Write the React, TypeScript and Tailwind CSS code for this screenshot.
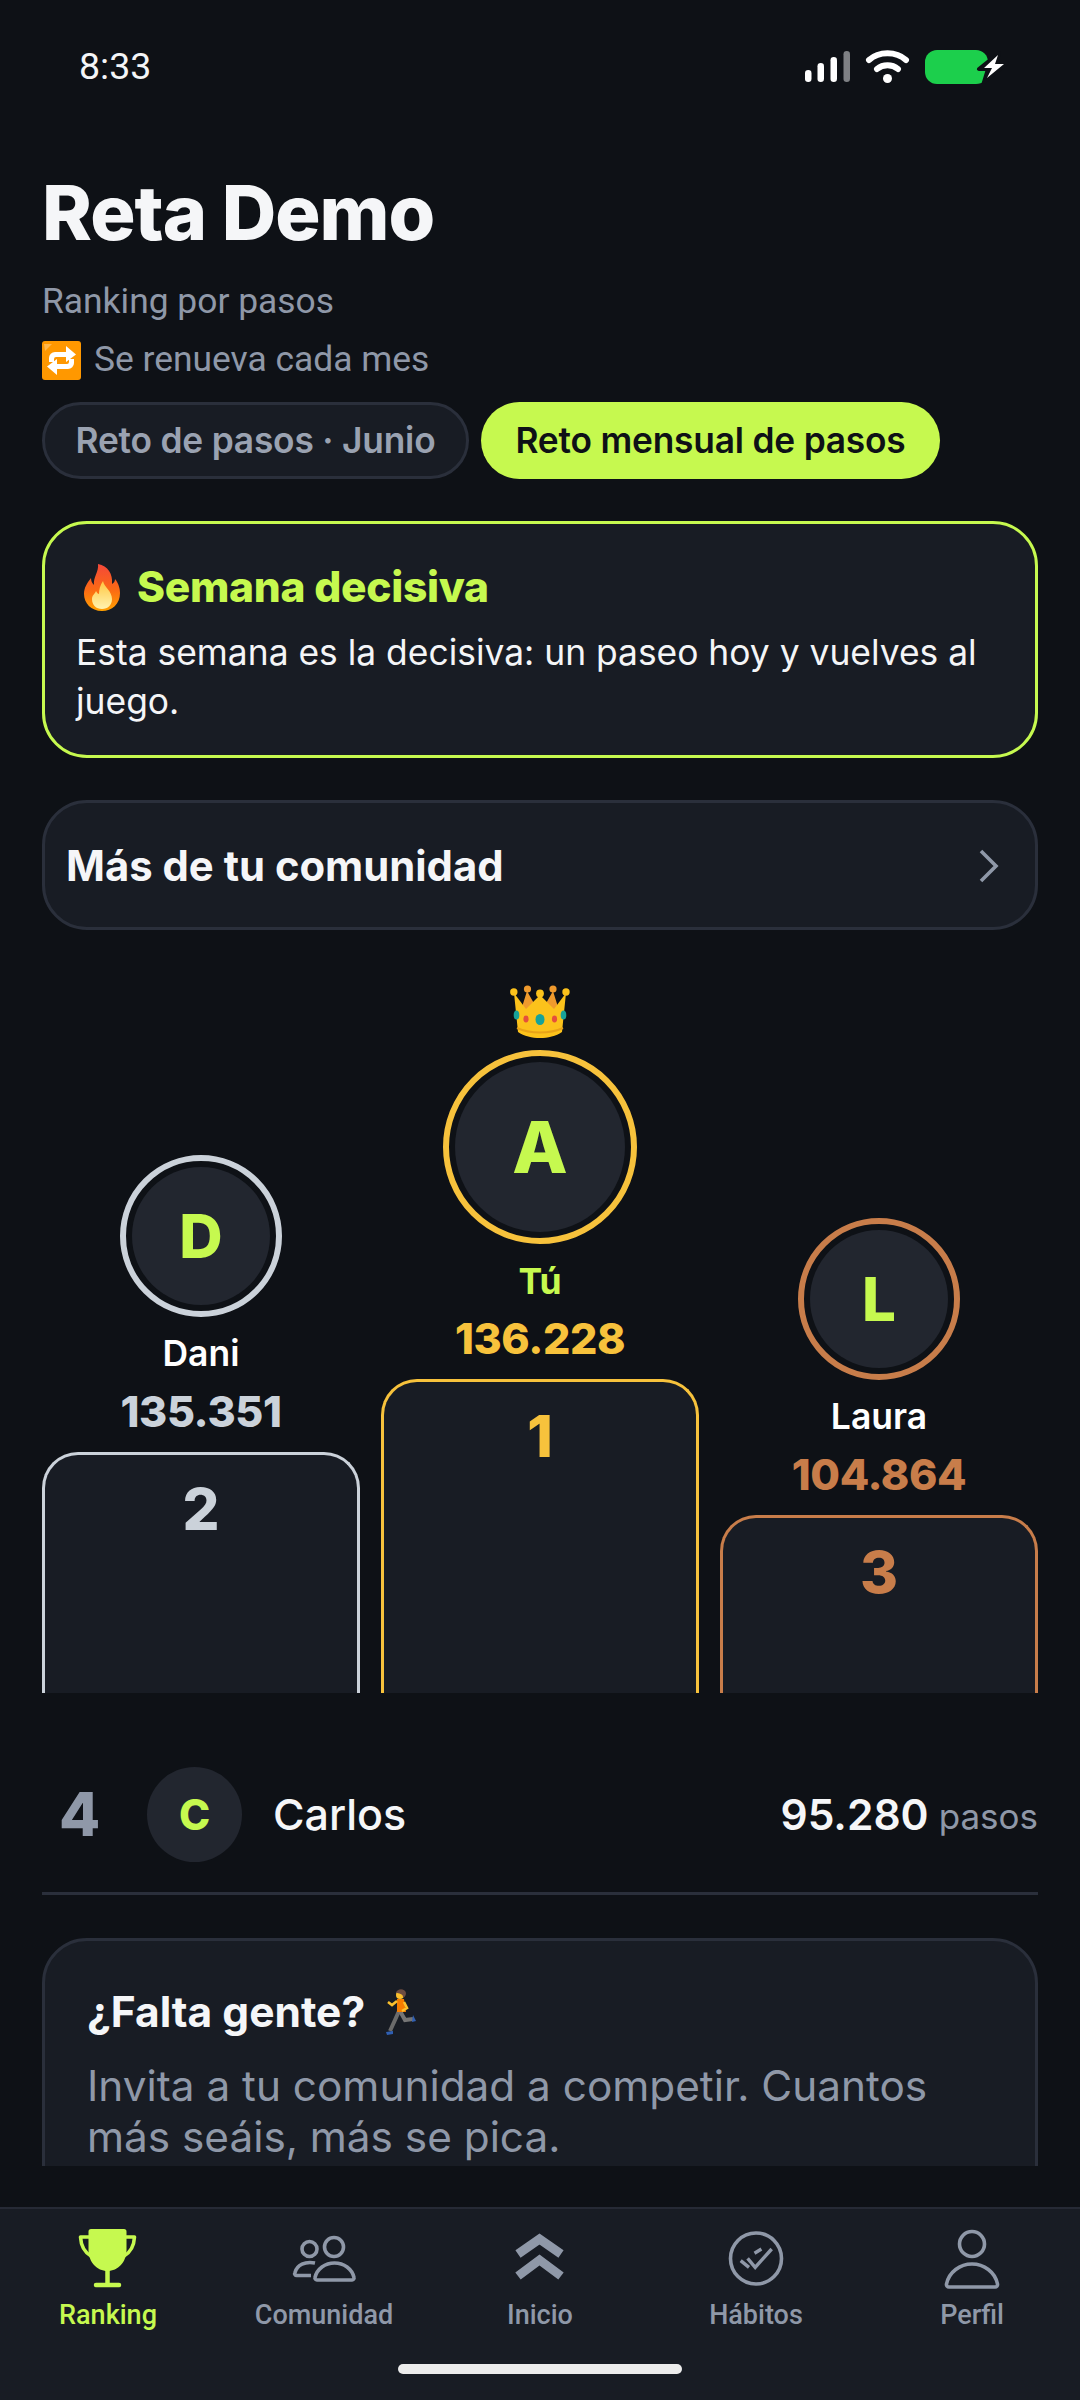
function StatusIcons() {
  return (
    <svg width="206" height="40" viewBox="803 48 206 40" className="block">
      <rect x="805" y="71" width="6.5" height="12" rx="3.2" fill="#fff" />
      <rect x="817.5" y="64" width="6.5" height="19" rx="3.2" fill="#fff" />
      <rect x="830.5" y="58" width="6.5" height="25" rx="3.2" fill="#fff" />
      <rect x="843.5" y="52" width="6.5" height="31" rx="3.2" fill="#7e8084" />
      <path d="M869 61 C879 52 896 52 906 61" fill="none" stroke="#fff" strokeWidth="6" strokeLinecap="round" />
      <path d="M877 70 C883 65 892 65 898 70" fill="none" stroke="#fff" strokeWidth="6" strokeLinecap="round" />
      <circle cx="887.5" cy="79.5" r="4.5" fill="#fff" />
      <rect x="925" y="51" width="63" height="34" rx="12" fill="#1ccf4c" />
      <path d="M999 54 L979 70 H988 L984 83 L1007 64 H996 Z" fill="#0e1116" stroke="#0e1116" strokeWidth="4" strokeLinejoin="round" />
      <path d="M998 56 L984 69 H992 L987 79 L1004 65 H995 Z" fill="#fff" />
    </svg>
  )
}

function RepeatEmoji() {
  return (
    <svg width="39" height="39" viewBox="0 0 39 39" className="shrink-0">
      <rect width="39" height="39" rx="3" fill="#ff9800" />
      <path d="M2 3 H10 L3 10 Z" fill="#ffb74d" />
      <path d="M7 21 V17 A6 6 0 0 1 13 11 H24 V5 L34 13.5 L24 21 V16 H14 A2 2 0 0 0 12 18 V21 Z" fill="#fff" />
      <path d="M32 18 V22 A6 6 0 0 1 26 28 H15 V34 L5 25.5 L15 18 V23 H25 A2 2 0 0 0 27 21 V18 Z" fill="#fff" />
    </svg>
  )
}

function FireEmoji() {
  return (
    <svg width="36" height="47" viewBox="0 0 36 47" className="shrink-0">
      <defs>
        <linearGradient id="fireOuter" x1="0" y1="0" x2="0" y2="1">
          <stop offset="0" stopColor="#f4483a" />
          <stop offset="0.55" stopColor="#fb6a14" />
          <stop offset="1" stopColor="#ffa000" />
        </linearGradient>
        <linearGradient id="fireInner" x1="0" y1="0" x2="0" y2="1">
          <stop offset="0" stopColor="#ffc640" />
          <stop offset="1" stopColor="#fff3b0" />
        </linearGradient>
      </defs>
      <path d="M14 0 C24 2 29 10 28 20 C30 19 31 17 31 15 C35 20 36 25 36 29 C36 40 28 47 18 47 C7 47 0 39 0 30 C0 24 3 19 7 14 C7 17 8 19 10 21 C9 13 15 8 14 0 Z" fill="url(#fireOuter)" />
      <path d="M19 17 C20 23 28 27 28 35 C28 41 24 45 18 45 C12 45 8 41 8 35 C8 31 11 30 12 27 C13 29 14 30 15 30 C15 26 16 21 19 17 Z" fill="url(#fireInner)" />
    </svg>
  )
}

function CrownEmoji() {
  return (
    <svg width="60" height="56" viewBox="0 0 60 56" className="block">
      <path d="M17 7 L30 30 L43 7 L52 36 H8 Z" fill="#ef9a2d" />
      <circle cx="17.5" cy="5" r="3.6" fill="#ef9a2d" />
      <circle cx="43" cy="5" r="3.6" fill="#ef9a2d" />
      <path d="M4 9 L16 25 L30 11 L44 25 L56 9 L52 48 C40 56 20 56 8 48 Z" fill="#fcc21b" />
      <circle cx="3.8" cy="8" r="3.7" fill="#fcc21b" />
      <circle cx="56" cy="8" r="3.7" fill="#fcc21b" />
      <circle cx="30" cy="9.5" r="3.9" fill="#fcc21b" />
      <path d="M7 44 C20 50 40 50 53 44" fill="none" stroke="#e8a317" strokeWidth="2" />
      <ellipse cx="6.5" cy="31" rx="2.8" ry="4.5" fill="#17a29a" />
      <ellipse cx="53.5" cy="31" rx="2.8" ry="4.5" fill="#17a29a" />
      <ellipse cx="30" cy="35.5" rx="4.5" ry="5.5" fill="#17a29a" />
      <ellipse cx="16" cy="35" rx="2.6" ry="3.4" fill="#e5503c" />
      <ellipse cx="44.5" cy="35" rx="2.6" ry="3.4" fill="#e5503c" />
    </svg>
  )
}

function RunnerEmoji() {
  return (
    <svg width="34" height="48" viewBox="0 0 34 48" className="shrink-0">
      <path d="M14 23 L10 32 L5 43" fill="none" stroke="#6b6b6b" strokeWidth="4" />
      <path d="M15 23 L20 32 L28 31" fill="none" stroke="#757575" strokeWidth="4" />
      <path d="M1 44 L8 43 L8 46 L2 47 Z" fill="#2f5fb3" />
      <path d="M28 27 L31 33 L27 34 Z" fill="#2f5fb3" />
      <path d="M12 11 L19 11 L21 24 L12 24 Z" fill="#f57c00" />
      <path d="M12 13 L7 17 L3 14" fill="none" stroke="#fbc02d" strokeWidth="2.6" />
      <path d="M19 14 L22 20 L17 23" fill="none" stroke="#fbc02d" strokeWidth="2.6" />
      <circle cx="15" cy="7" r="4" fill="#fbc02d" />
      <path d="M11 5 C12 0 20 0 21 5 C21 8 19 10 18 9 C18 6 14 5 11 5 Z" fill="#6d4c41" />
    </svg>
  )
}

function TrophyIcon() {
  return (
    <svg width="60" height="60" viewBox="0 0 60 60">
      <path d="M13 1 H46 a2.5 2.5 0 0 1 2.5 2.5 V22 C48.5 34 40 43 29.5 43 C19 43 10.5 34 10.5 22 V3.5 A2.5 2.5 0 0 1 13 1 Z" fill="#c6f94f" />
      <path d="M29.5 42 V57" stroke="#c6f94f" strokeWidth="4.5" />
      <path d="M18 57 H41" stroke="#c6f94f" strokeWidth="4.5" strokeLinecap="round" />
      <path d="M11 9 H2.5 C3 18 6 24 13 28 M48 9 H56.5 C56 18 53 24 46 28" fill="none" stroke="#c6f94f" strokeWidth="3.6" strokeLinejoin="round" />
    </svg>
  )
}

function PeopleIcon() {
  return (
    <svg width="66" height="60" viewBox="0 0 66 60" fill="none" stroke="#8f98a8" strokeWidth="3.6">
      <circle cx="43" cy="14" r="9.5" />
      <circle cx="18.5" cy="16" r="7.5" />
      <path d="M26 47 H61 a2 2 0 0 0 2-2.5 C61 36 53 30 43.5 30 C34 30 26 36 24 44.5 a2 2 0 0 0 2 2.5 Z" />
      <path d="M24 30 C14 28 6 32 4 39.5 a2 2 0 0 0 2 3 H20" />
    </svg>
  )
}

function HomeIcon() {
  return (
    <svg width="50" height="60" viewBox="0 0 50 60" fill="none" stroke="#8f98a8" strokeWidth="9">
      <path d="M3 21 L24.5 6 L46 21" />
      <path d="M3 43 L24.5 27 L46 43" />
    </svg>
  )
}

function HabitsIcon() {
  return (
    <svg width="58" height="60" viewBox="0 0 58 60" fill="none" stroke="#8f98a8" strokeWidth="3.6">
      <circle cx="29" cy="28.5" r="25.5" />
      <path d="M13.7 30.7 L22 37.3 M20.6 28.3 L28.2 37.3 L44.7 19 M27.5 23.3 L34.4 19" strokeWidth="3.4" />
    </svg>
  )
}

function ProfileIcon() {
  return (
    <svg width="58" height="62" viewBox="0 0 58 62" fill="none" stroke="#8f98a8" strokeWidth="3.6">
      <circle cx="29" cy="16" r="12.5" />
      <path d="M6 59 H52 a2.5 2.5 0 0 0 2.5-3 C52 44 41 36 29 36 C17 36 6 44 3.5 56 a2.5 2.5 0 0 0 2.5 3 Z" />
    </svg>
  )
}

const tabs = [
  { label: 'Ranking', icon: <TrophyIcon />, top: 'mt-0', color: 'text-[#c6f94f]' },
  { label: 'Comunidad', icon: <PeopleIcon />, top: 'mt-[5px]', color: 'text-[#8f98a8]' },
  { label: 'Inicio', icon: <HomeIcon />, top: 'mt-[5px]', color: 'text-[#8f98a8]' },
  { label: 'Hábitos', icon: <HabitsIcon />, top: 'mt-[2px]', color: 'text-[#8f98a8]' },
  { label: 'Perfil', icon: <ProfileIcon />, top: 'mt-0', color: 'text-[#8f98a8]' },
]

function Avatar({ letter, size, ring, text }: { letter: string; size: string; ring: string; text: string }) {
  return (
    <div className={`${size} ${ring} flex items-center justify-center rounded-full border-[6px] p-[6px]`}>
      <div className={`${text} flex h-full w-full items-center justify-center rounded-full bg-[#22262f] font-extrabold text-[#c6f94f]`}>
        {letter}
      </div>
    </div>
  )
}

export default function App() {
  return (
    <div className="flex h-[2400px] w-[1080px] flex-col overflow-hidden bg-[#0e1116] font-[Inter,sans-serif] text-white">
      <div className="flex h-[134px] shrink-0 items-center justify-between pl-[79px] pr-[71px]">
        <span className="font-[Roboto,sans-serif] text-[37.5px] leading-none text-[#f4f5f7]">8:33</span>
        <StatusIcons />
      </div>

      <main className="h-[2032px] shrink-0 overflow-hidden px-[42px] pt-[36px]">
        <h1 className="h-[86px] text-[75.5px] font-extrabold leading-[86px] tracking-[-1px] text-[#f5f6f8]">Reta Demo</h1>
        <p className="mt-[21px] font-[Roboto,sans-serif] text-[35.4px] leading-[48px] text-[#8f98a8]">Ranking por pasos</p>
        <div className="mt-[11px] flex h-[48px] items-center gap-[13px] font-[Roboto,sans-serif] text-[35.4px] text-[#8f98a8]">
          <RepeatEmoji />
          <span>Se renueva cada mes</span>
        </div>

        <div className="mt-[18px] flex gap-[12px]">
          <div className="flex h-[77px] w-[427px] items-center justify-center rounded-full border-[3px] border-[#2a2f3b] bg-[#181c24] pt-[1px] text-[35.3px] font-semibold tracking-[-0.2px] text-[#9aa2b1]">
            Reto de pasos · Junio
          </div>
          <div className="flex h-[77px] w-[459px] items-center justify-center rounded-full bg-[#c6f94f] pt-[1px] text-[35.3px] font-semibold tracking-[-0.2px] text-[#0e1116]">
            Reto mensual de pasos
          </div>
        </div>

        <section className="mt-[42px] h-[237px] rounded-[45px] border-[3px] border-[#c6f94f] bg-[#181c24] pl-[31px] pr-[24px] pt-[38px]">
          <div className="ml-[8px] flex h-[50px] items-center gap-[17px]">
            <FireEmoji />
            <h2 className="text-[42.5px] font-extrabold leading-[50px] tracking-[-0.3px] text-[#c6f94f]">Semana decisiva</h2>
          </div>
          <p className="mt-[16px] text-[35.4px] leading-[49px] text-[#f4f5f7]">
            Esta semana es la decisiva: un paseo hoy y vuelves al juego.
          </p>
        </section>

        <section className="mt-[42px] flex h-[130px] items-center justify-between rounded-[45px] border-[3px] border-[#2a2f3b] bg-[#181c24] pl-[21px] pr-[35px] pt-[2px]">
          <span className="text-[41.8px] font-bold text-[#f5f6f8]">Más de tu comunidad</span>
          <svg width="22" height="34" viewBox="0 0 22 34" fill="none" stroke="#8f98a8" strokeWidth="3.6">
            <path d="M3 2 L18 17 L3 32" />
          </svg>
        </section>

        <div className="mt-[53px] grid h-[710px] grid-cols-3 items-end gap-[21px]">
          <div className="flex flex-col items-center">
            <Avatar letter="D" size="h-[162px] w-[162px]" ring="border-[#cbd2da]" text="text-[60px]" />
            <span className="mt-[17px] text-[35.5px] font-semibold leading-[40px]">Dani</span>
            <span className="mt-[13px] text-[43px] font-extrabold leading-[48px] tracking-[-0.4px] text-[#cbd2da]">135.351</span>
            <div className="mt-[17px] flex h-[241px] w-full justify-center rounded-t-[36px] border-[3px] border-b-0 border-[#cbd2da] bg-[#181c24] pt-[19px]">
              <span className="text-[58px] font-extrabold leading-[70px] text-[#cbd2da]">2</span>
            </div>
          </div>
          <div className="flex flex-col items-center">
            <CrownEmoji />
            <div className="mt-[10px]">
              <Avatar letter="A" size="h-[194px] w-[194px]" ring="border-[#f7c23c]" text="text-[72px]" />
            </div>
            <span className="mt-[18px] text-[35.5px] font-bold leading-[40px] text-[#c6f94f]">Tú</span>
            <span className="mt-[12px] text-[43px] font-extrabold leading-[48px] tracking-[-0.4px] text-[#f7c23c]">136.228</span>
            <div className="mt-[17px] flex h-[314px] w-full justify-center rounded-t-[36px] border-[3px] border-b-0 border-[#f7c23c] bg-[#181c24] pt-[19px]">
              <span className="text-[58px] font-extrabold leading-[70px] text-[#f7c23c]">1</span>
            </div>
          </div>
          <div className="flex flex-col items-center">
            <Avatar letter="L" size="h-[162px] w-[162px]" ring="border-[#c87d4a]" text="text-[60px]" />
            <span className="mt-[17px] text-[35.5px] font-semibold leading-[40px]">Laura</span>
            <span className="mt-[13px] text-[43px] font-extrabold leading-[48px] tracking-[-0.4px] text-[#c87d4a]">104.864</span>
            <div className="mt-[17px] flex h-[178px] w-full justify-center rounded-t-[36px] border-[3px] border-b-0 border-[#c87d4a] bg-[#181c24] pt-[19px]">
              <span className="text-[58px] font-extrabold leading-[70px] text-[#c87d4a]">3</span>
            </div>
          </div>
        </div>

        <div className="mt-[74px] flex items-center border-b-[3px] border-[#2a2f3b] pb-[30px]">
          <span className="w-[105px] pl-[17px] text-[60px] font-extrabold leading-[95px] text-[#8f98a8]">4</span>
          <div className="flex h-[95px] w-[95px] items-center justify-center rounded-full bg-[#22262f] text-[42px] font-extrabold text-[#c6f94f]">
            C
          </div>
          <span className="ml-[31px] text-[43px] font-medium text-[#f5f6f8]">Carlos</span>
          <span className="ml-auto text-[42.5px] font-semibold text-[#f5f6f8]">95.280</span>
          <span className="ml-[10px] mt-[4px] text-[35px] text-[#8f98a8]">pasos</span>
        </div>

        <section className="mt-[43px] h-[400px] rounded-[45px] border-[3px] border-[#2a2f3b] bg-[#181c24] pl-[42px] pr-[60px] pt-[46px]">
          <div className="flex h-[50px] items-center gap-[20px]">
            <h2 className="text-[42.5px] font-bold leading-[50px] text-[#f5f6f8]">¿Falta gente?</h2>
            <RunnerEmoji />
          </div>
          <p className="mt-[23px] text-[42.3px] leading-[51px] text-[#8f98a8]">
            Invita a tu comunidad a competir. Cuantos más seáis, más se pica.
          </p>
        </section>
      </main>

      <div className="h-[41px] shrink-0" />

      <nav className="flex flex-1 flex-col border-t-[2px] border-[#262a35] bg-[#181c24] pt-[19px]">
        <div className="grid grid-cols-5">
          {tabs.map((tab) => (
            <div key={tab.label} className={`flex flex-col items-center ${tab.color}`}>
              <div className="h-[70px]">
                <div className={tab.top}>{tab.icon}</div>
              </div>
              <span className="font-[Roboto,sans-serif] text-[27px] font-medium leading-[34px]">{tab.label}</span>
            </div>
          ))}
        </div>
        <div className="mx-auto mt-[32px] h-[10px] w-[284px] rounded-full bg-[#ececec]" />
      </nav>
    </div>
  )
}
